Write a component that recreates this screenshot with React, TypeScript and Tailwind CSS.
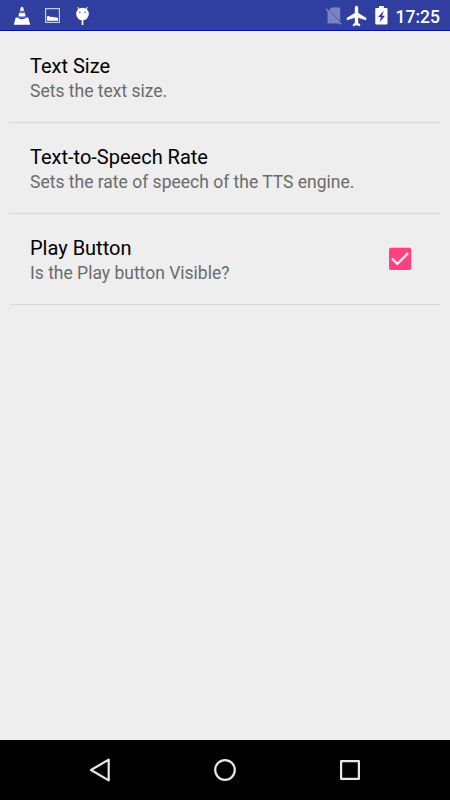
import { useState } from "react";

type Preference = {
  title: string;
  summary: string;
  checkable?: boolean;
};

const preferences: Preference[] = [
  { title: "Text Size", summary: "Sets the text size." },
  { title: "Text-to-Speech Rate", summary: "Sets the rate of speech of the TTS engine." },
  { title: "Play Button", summary: "Is the Play button Visible?", checkable: true },
];

function StatusBar() {
  return (
    <header className="flex h-[31px] shrink-0 items-start justify-between border-b border-[#0014a0] bg-[#303f9f] pr-[10px] pl-[7px] text-white">
      <div className="flex">
        {/* traffic cone */}
        <svg viewBox="0 0 30 30" className="size-[30px]" fill="currentColor" aria-hidden="true">
          <path d="M14 7.2q1-.8 2 0l1 3.1q-2 1-4 0zM12.4 12.4q2.6 1.5 5.2 0l1 3.1q-3.6 2-7.2 0zM10.2 17.6q4.8 3.2 9.6 0h1.5l1.9 7.1H6.8l1.9-7.1z" />
          <path d="M13 10.2h4l.7 2.4h-5.4zM11.4 15.4h7.2l.8 2.4h-8.8z" opacity=".3" />
        </svg>
        {/* picture */}
        <svg viewBox="0 0 30 30" className="size-[30px]" aria-hidden="true">
          <rect x="8.6" y="8.6" width="13.8" height="13.8" fill="none" stroke="#c5c9e5" strokeWidth="1.2" />
          <path d="M10 20.8v-4.3q1.8-1.5 3.8.8 2-1 3.2.2 1.9-.6 4 .3v3z" fill="currentColor" />
        </svg>
        {/* debug head on a stick */}
        <svg viewBox="0 0 30 30" className="size-[30px]" aria-hidden="true">
          <path d="m10.7 7.2 2 3M20.3 7.2l-2 3" stroke="currentColor" strokeWidth="1.1" />
          <circle cx="15.5" cy="14" r="6.3" fill="currentColor" />
          <path d="M15.5 19v6" stroke="currentColor" strokeWidth="1.7" />
          <circle cx="12.9" cy="12.3" r=".75" fill="#303f9f" />
          <circle cx="18.1" cy="12.3" r=".75" fill="#303f9f" />
        </svg>
      </div>

      <div className="flex">
        {/* no sim card */}
        <svg viewBox="0 0 20 30" className="h-[30px] w-5" aria-hidden="true">
          <path d="M6.2 7.5H14q1.2 0 1.2 1.2v12.9L3.7 10.2z" fill="#7984c1" />
          <path d="M2.5 10.8 14.8 23q-.3.6-1.1.6h-10q-1.2 0-1.2-1.2z" fill="#7984c1" />
          <path d="m.9 8.9 15.500 15.500" stroke="#8993c8" strokeWidth="1.2" />
        </svg>
        <svg
          viewBox="0 0 24 24"
          className="mt-[3.5px] size-6"
          fill="currentColor"
          stroke="currentColor"
          strokeWidth=".4"
          aria-hidden="true"
        >
          <path d="M21 16v-2l-8-5V3.5c0-.83-.67-1.5-1.5-1.5S10 2.67 10 3.5V9l-8 5v2l8-2.5V19l-2 1.5V22l3.5-1 3.5 1v-1.500L13 19v-5.500z" />
        </svg>
        {/* charging battery */}
        <svg viewBox="0 0 27 30" className="h-[30px] w-[27px]" aria-hidden="true">
          <path d="M10 6h4.800v1.900h2.600q1.100 0 1.100 1.100v14.500q0 1.100-1.100 1.100h-10q-1.100 0-1.100-1.100V9q0-1.100 1.100-1.100H10z" fill="currentColor" />
          <path d="M14.800 10.800 9 17h2.900l-1.300 5.200 5.400-6.400h-2.900z" fill="#303f9f" />
        </svg>
        <span className="text-[17.5px] leading-[34px] font-medium">17:25</span>
      </div>
    </header>
  );
}

function PreferenceRow({ title, summary, checkable }: Preference) {
  const [checked, setChecked] = useState(true);

  return (
    <li className="flex h-[91px] items-center justify-between border-b border-[#d9d9d9] pr-7 pl-5">
      <div className="pt-1">
        <h2 className="text-[20px] leading-[24px] text-black">{title}</h2>
        <p className="text-[17.5px] leading-[26px] text-[#6b6b6b]">{summary}</p>
      </div>
      {checkable && (
        <button
          type="button"
          role="checkbox"
          aria-checked={checked}
          aria-label={title}
          onClick={() => setChecked(!checked)}
        >
          <svg viewBox="0 0 24 24" className="size-6">
            <rect x="1" y=".7" width="22.3" height="22.3" rx="2" fill={checked ? "#ff4081" : "#757575"} />
            {checked && <path d="m4 11.5 5.4 5.4L20 6.2" fill="none" stroke="#eee" strokeWidth="2.4" />}
          </svg>
        </button>
      )}
    </li>
  );
}

function NavigationBar() {
  return (
    <nav className="flex h-[60px] shrink-0 items-center justify-center gap-[95px] bg-black text-[#e8e8e8]">
      <button type="button" aria-label="Back">
        <svg viewBox="0 0 30 30" className="size-[30px]" fill="none" stroke="currentColor" strokeWidth="2.2" strokeLinejoin="round">
          <path d="M23.7 4.6v20.8L6 15z" />
        </svg>
      </button>
      <button type="button" aria-label="Home">
        <svg viewBox="0 0 30 30" className="size-[30px]" fill="none" stroke="currentColor" strokeWidth="2.2">
          <circle cx="15" cy="15" r="9.8" />
        </svg>
      </button>
      <button type="button" aria-label="Recent apps">
        <svg viewBox="0 0 30 30" className="size-[30px]" fill="none" stroke="currentColor" strokeWidth="2.2" strokeLinejoin="round">
          <rect x="6.1" y="6.1" width="17.8" height="17.8" />
        </svg>
      </button>
    </nav>
  );
}

export default function App() {
  return (
    <div className="flex h-screen flex-col bg-[#eeeeee] font-['Roboto',sans-serif]">
      <StatusBar />
      <main className="grow px-[10px] pt-px">
        <ul>
          {preferences.map((preference) => (
            <PreferenceRow key={preference.title} {...preference} />
          ))}
        </ul>
      </main>
      <NavigationBar />
    </div>
  );
}
